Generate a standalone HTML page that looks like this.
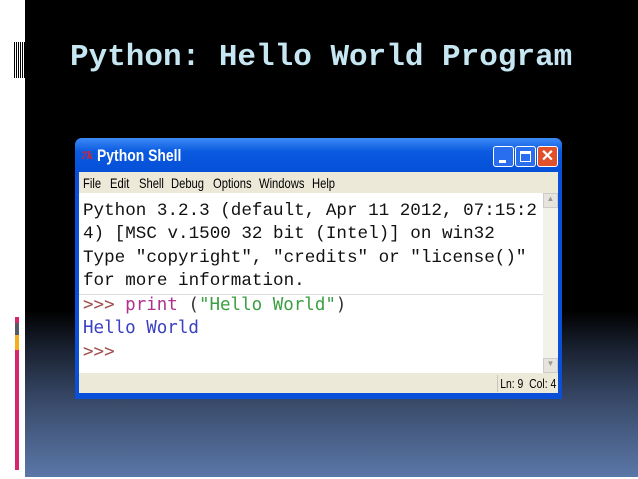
<!DOCTYPE html>
<html><head><style>
*{margin:0;padding:0;box-sizing:border-box}
body{width:638px;height:479px;overflow:hidden;position:relative;background:#fff;font-family:"Liberation Sans",sans-serif}
.bg{position:absolute;left:25px;top:0;width:613px;height:477px;background:linear-gradient(#000 0px,#000 310px,#1a2232 350px,#3a4c6c 405px,#5b77a8 477px)}
.bar{position:absolute}
.title{position:absolute;left:70px;top:40px;font:bold 31px "Liberation Mono",monospace;color:#c6e6f2;white-space:nowrap}
.win{position:absolute;left:75px;top:138px;width:487px;height:261px;background:#0a4fd8;border-radius:7px 7px 0 0}
.tb{position:absolute;left:0;top:0;width:100%;height:34px;border-radius:7px 7px 0 0;background:linear-gradient(#3d8af5,#0a5ae0 40%,#0550d8)}
.tt{position:absolute;left:22px;top:8px;font:bold 17px "Liberation Sans",sans-serif;color:#fff;transform:scaleX(.82);transform-origin:left;white-space:nowrap}
.btn{position:absolute;top:8px;width:21px;height:21px;border:1px solid #fff;border-radius:3px;background:#2a6ef0}
.menu{position:absolute;left:4px;top:34px;width:479px;height:21px;background:#ece9d8;font:14px "Liberation Sans",sans-serif;color:#000}
.menu span{position:absolute;top:3px;transform:scaleX(.8);transform-origin:left}
.txt{position:absolute;left:4px;top:55px;width:479px;height:180px;background:#fff}
.mono{position:absolute;left:4px;font:17.6px "Liberation Mono",monospace;white-space:pre;color:#111}
.m2{position:absolute;left:4px;font:17.5px "DejaVu Sans Mono",monospace;white-space:pre}
.sb{position:absolute;left:464px;top:0;width:15px;height:180px;background:#f2f1ea}
.st{position:absolute;left:4px;top:235px;width:479px;height:20px;background:#ece9d8}
</style></head><body>
<div class="bar" style="left:14px;top:42px;width:11px;height:36px;background:repeating-linear-gradient(90deg,#000 0 1px,#fff 1px 2px)"></div>
<div class="bar" style="left:15px;top:317px;width:4px;height:153px;background:#d8266e"></div>
<div class="bar" style="left:15px;top:323px;width:4px;height:12px;background:#555a66"></div>
<div class="bar" style="left:15px;top:335px;width:4px;height:15px;background:#f2b01e"></div>
<div class="bg"></div>
<div class="title">Python: Hello World Program</div>
<div class="win">
 <div class="tb">
  <div style="position:absolute;left:6px;top:10px;font:italic bold 12px 'Liberation Serif',serif;color:#e0202a">7k</div>
  <div class="tt">Python Shell</div>
  <div class="btn" style="left:418px"><div style="position:absolute;left:5px;top:13px;width:7px;height:3px;background:#fff"></div></div>
  <div class="btn" style="left:440px"><div style="position:absolute;left:4px;top:4px;width:11px;height:11px;border:1px solid #fff;border-top-width:3px"></div></div>
  <div class="btn" style="left:462px;background:#e0502a;color:#fff;font:bold 16px 'Liberation Sans';text-align:center;line-height:19px">✕</div>
 </div>
 <div class="menu"><span style="left:4px">File</span><span style="left:31px">Edit</span><span style="left:60px">Shell</span><span style="left:92px">Debug</span><span style="left:134px">Options</span><span style="left:180px">Windows</span><span style="left:233px">Help</span></div>
 <div class="txt">
  <div class="mono" style="top:8px">Python 3.2.3 (default, Apr 11 2012, 07:15:2</div>
  <div class="mono" style="top:31px">4) [MSC v.1500 32 bit (Intel)] on win32</div>
  <div class="mono" style="top:55px">Type "copyright", "credits" or "license()"</div>
  <div class="mono" style="top:78px">for more information.</div>
  <div style="position:absolute;left:0;top:101px;width:464px;height:1px;background:#ddd"></div>
  <div class="m2" style="top:102px"><span style="color:#a05050">&gt;&gt;&gt; </span><span style="color:#b03090">print</span> <span style="color:#333">(</span><span style="color:#3aa040">"Hello World"</span><span style="color:#333">)</span></div>
  <div class="m2" style="top:125px;color:#3a40c0">Hello World</div>
  <div class="m2" style="top:149px;color:#a05050">&gt;&gt;&gt;</div>
  <div class="sb"><div style="height:15px;background:#e6e4dc;border:1px solid #ccc;font-size:8px;color:#999;text-align:center">▲</div><div style="position:absolute;bottom:0;width:15px;height:15px;background:#e6e4dc;border:1px solid #ccc;font-size:8px;color:#999;text-align:center">▼</div></div>
 </div>
 <div class="st"><div style="position:absolute;right:0;top:2px;width:61px;height:17px;border-left:1px solid #bbb;font:13px 'Liberation Sans';padding:1px 0 0 3px;transform:scaleX(.8);transform-origin:left;white-space:nowrap">Ln: 9 &nbsp;Col: 4</div></div>
</div>
</body></html>
